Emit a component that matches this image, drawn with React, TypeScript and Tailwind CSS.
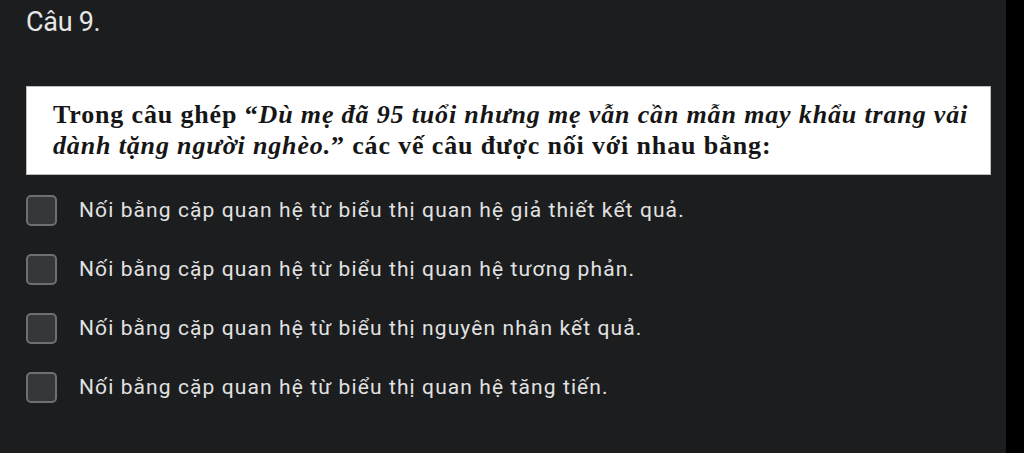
const options = [
  "Nối bằng cặp quan hệ từ biểu thị quan hệ giả thiết kết quả.",
  "Nối bằng cặp quan hệ từ biểu thị quan hệ tương phản.",
  "Nối bằng cặp quan hệ từ biểu thị nguyên nhân kết quả.",
  "Nối bằng cặp quan hệ từ biểu thị quan hệ tăng tiến.",
];

export default function App() {
  return (
    <div className="flex h-[453px] w-[1024px] overflow-hidden bg-black">
      <div className="w-[1006px] bg-[#1c1d1f] pl-[26px] pr-[15px] pt-[6px]">
        <h1
          className="text-[27px] leading-[32px] tracking-[-0.3px] text-[#e6e6e6]"
          style={{ fontFamily: "Roboto, 'Noto Sans', sans-serif" }}
        >
          Câu 9.
        </h1>

        <div
          className="mt-[48px] whitespace-nowrap border border-[#bdbdbd] bg-white pl-[26px] pr-[10px] pt-[12px] pb-[13px] text-[26px] leading-[31px] font-bold tracking-[0.85px] text-[#161616]"
          style={{ fontFamily: "'Liberation Serif', 'Times New Roman', serif" }}
        >
          Trong câu ghép “<i>Dù mẹ đã 95 tuổi nhưng mẹ vẫn cần mẫn may khẩu trang vải</i>
          <br />
          <i>dành tặng người nghèo.</i>” các vế câu được nối với nhau bằng:
        </div>

        <ul
          className="mt-[20px] flex flex-col gap-[28px]"
          style={{ fontFamily: "Roboto, 'Noto Sans', sans-serif" }}
        >
          {options.map((opt) => (
            <li key={opt} className="flex items-center gap-[22px]">
              <span className="h-[31px] w-[31px] shrink-0 rounded-[5px] border-2 border-[#6f6f6f] bg-[#36373a]" />
              <span className="text-[21px] leading-[31px] tracking-[1.1px] text-[#e2e2e2]">{opt}</span>
            </li>
          ))}
        </ul>
      </div>
    </div>
  );
}
